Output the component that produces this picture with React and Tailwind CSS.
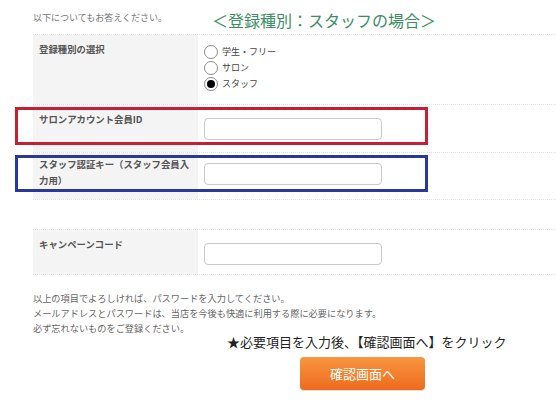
const jp = { fontFamily: '"Noto Sans CJK JP", "Noto Sans", sans-serif' };

function Radio({ label, checked }) {
    return (
        <div className="flex items-center h-[16px]">
            <span className="flex items-center justify-center w-[14px] h-[14px] rounded-full border border-[#8a8a8a] bg-white">
                {checked && <span className="w-[8px] h-[8px] rounded-full bg-black" />}
            </span>
            <span className="ml-[4px] text-[9px] text-[#444]">{label}</span>
        </div>
    );
}

function Field() {
    return <div className="w-[178px] h-[22px] rounded-[4px] border-[1.5px] border-[#c9c9c9] bg-white" />;
}

function Row({ label, height, pt, labelPt, children, border = true }) {
    return (
        <div className={`flex ${border ? 'border-b border-dotted border-[#e2e2e2]' : ''}`} style={{ height }}>
            <div className="w-[165px] shrink-0 bg-[#f4f4f4] pl-[6px]" style={{ paddingTop: labelPt }}>
                <div className="text-[9.4px] leading-[16px] font-bold text-[#555]">{label}</div>
            </div>
            <div className="flex-1 pl-[6px]" style={{ paddingTop: pt }}>
                {children}
            </div>
        </div>
    );
}

export default function App() {
    return (
        <div className="relative w-[556px] h-[419px] bg-white overflow-hidden" style={jp}>
            {/* heading */}
            <div className="flex items-center h-[34px] pl-[33px]">
                <span className="text-[9px] text-[#777] w-[179px] pt-[2px]">以下についてもお答えください。</span>
                <span className="text-[16px] text-[#3b8d62] pt-[6px]">＜登録種別：スタッフの場合＞</span>
            </div>

            <div className="pl-[33px]">
                <div className="border-t border-dotted border-[#e2e2e2]">
                    <Row label="登録種別の選択" height={70} labelPt={6} pt={9}>
                        <Radio label="学生・フリー" />
                        <Radio label="サロン" />
                        <Radio label="スタッフ" checked />
                    </Row>
                    <Row label="サロンアカウント会員ID" height={48} labelPt={6} pt={13}>
                        <Field />
                    </Row>
                    <Row label={<>スタッフ認証キー（スタッフ会員入<br />力用）</>} height={47} labelPt={3} pt={10}>
                        <Field />
                    </Row>
                </div>

                <div className="h-[29px]" />

                <div className="border-t border-dotted border-[#e2e2e2]">
                    <Row label="キャンペーンコード" height={45} labelPt={6} pt={13}>
                        <Field />
                    </Row>
                </div>

                <div className="mt-[16px] text-[9.2px] leading-[15px] text-[#666]">
                    <p>以上の項目でよろしければ、パスワードを入力してください。</p>
                    <p>メールアドレスとパスワードは、当店を今後も快適に利用する際に必要になります。</p>
                    <p>必ず忘れないものをご登録ください。</p>
                </div>
            </div>

            <div className="pl-[227px] -mt-[3px] text-[13px] leading-[18px] text-[#222]">
                ★必要項目を入力後、【確認画面へ】をクリック
            </div>

            <div className="pl-[300px] mt-[6px]">
                <button className="w-[125px] h-[33px] rounded-[4px] bg-gradient-to-b from-[#f8963f] to-[#ee6a1c] text-white text-[13px] shadow-[0_1px_1px_rgba(0,0,0,0.15)]">
                    確認画面へ
                </button>
            </div>

            {/* annotation boxes */}
            <div className="absolute left-[15px] top-[107px] w-[413px] h-[38px] border-[3px] border-[#c51f36]" />
            <div className="absolute left-[15px] top-[155px] w-[413px] h-[37px] border-[3px] border-[#29399b]" />
        </div>
    );
}
